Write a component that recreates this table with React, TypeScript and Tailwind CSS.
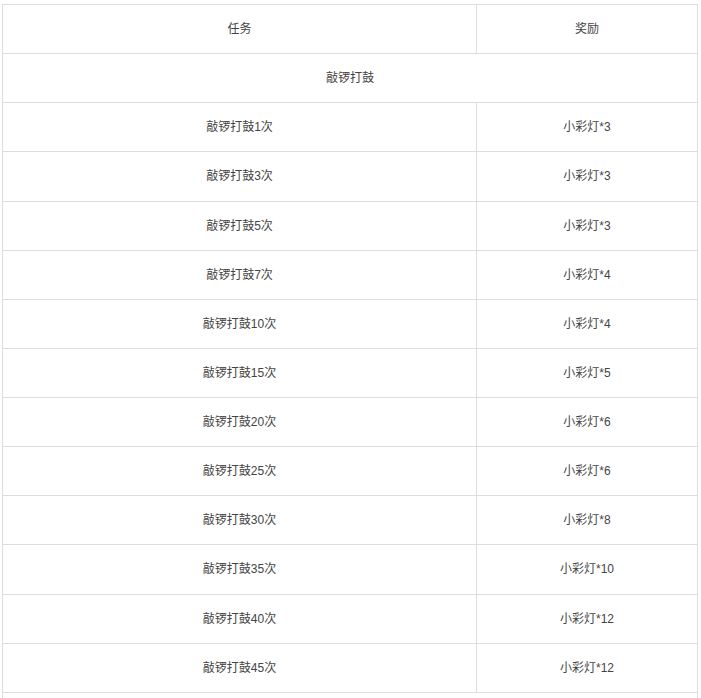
const rows: [string, string][] = [
  ['敲锣打鼓1次', '小彩灯*3'],
  ['敲锣打鼓3次', '小彩灯*3'],
  ['敲锣打鼓5次', '小彩灯*3'],
  ['敲锣打鼓7次', '小彩灯*4'],
  ['敲锣打鼓10次', '小彩灯*4'],
  ['敲锣打鼓15次', '小彩灯*5'],
  ['敲锣打鼓20次', '小彩灯*6'],
  ['敲锣打鼓25次', '小彩灯*6'],
  ['敲锣打鼓30次', '小彩灯*8'],
  ['敲锣打鼓35次', '小彩灯*10'],
  ['敲锣打鼓40次', '小彩灯*12'],
  ['敲锣打鼓45次', '小彩灯*12'],
];

const cell = 'border border-[#dddddd] text-center align-middle p-0';

const App = () => {
  return (
    <div
      className="bg-white pl-[2px] pt-[4px] text-[12px] text-[#444444]"
      style={{ fontFamily: '"Liberation Sans", "Noto Sans CJK SC", sans-serif' }}
    >
      <table className="w-[696px] border-collapse table-fixed">
        <colgroup>
          <col className="w-[474px]" />
          <col />
        </colgroup>
        <tbody>
          <tr className="h-[49.14px]">
            <td className={cell}>任务</td>
            <td className={cell}>奖励</td>
          </tr>
          <tr className="h-[49.14px]">
            <td className={cell} colSpan={2}>
              敲锣打鼓
            </td>
          </tr>
          {rows.map(([task, reward]) => (
            <tr key={task} className="h-[49.14px]">
              <td className={cell}>{task}</td>
              <td className={cell}>{reward}</td>
            </tr>
          ))}
          <tr className="h-[49.14px]">
            <td className={cell} colSpan={2}></td>
          </tr>
        </tbody>
      </table>
    </div>
  );
};

export default App;
